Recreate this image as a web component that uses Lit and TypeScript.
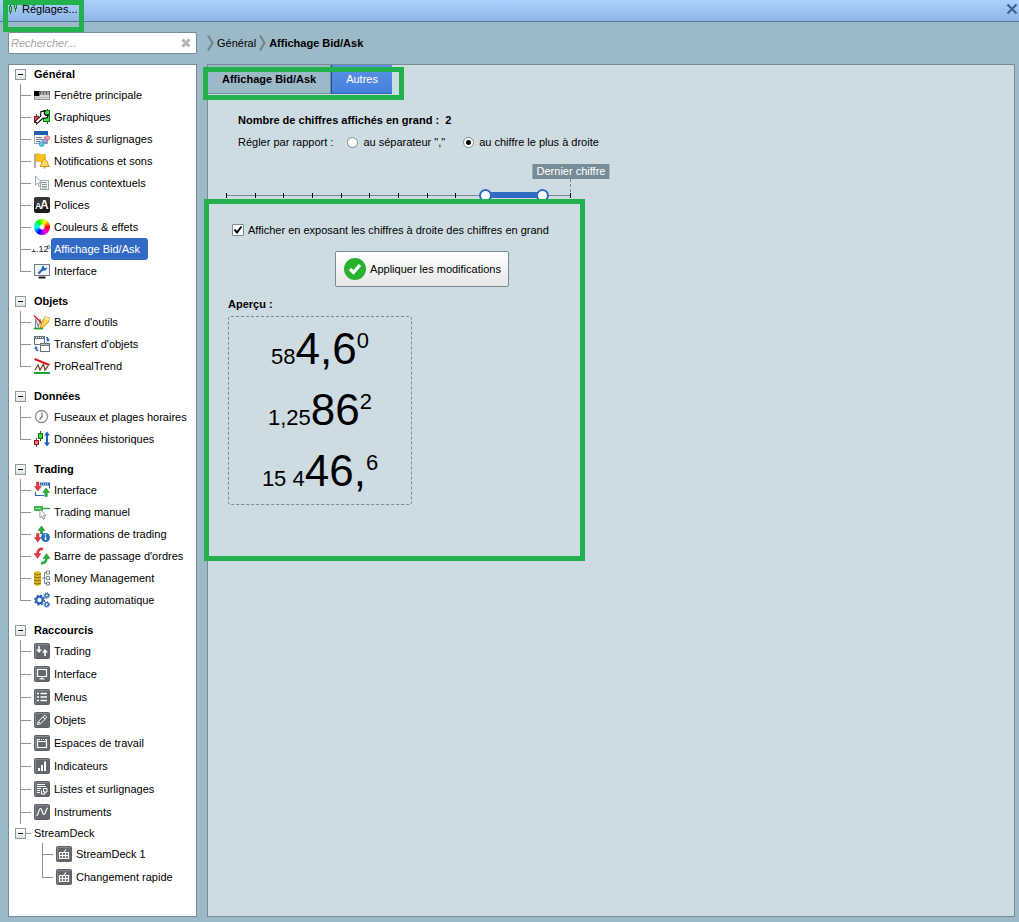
import { LitElement, html, css, svg, nothing } from "lit";
import { customElement, state } from "lit/decorators.js";
import { classMap } from "lit/directives/class-map.js";

const gray = (content: unknown) => svg`
  <rect x="0" y="0" width="16" height="16" rx="2" fill="#5c6165"/>
  <rect x="1" y="1" width="14" height="14" rx="1" fill="#65696d"/>
  <path d="M1.500 14.500V1.500H14.500" fill="none" stroke="#84898d" stroke-width="1"/>
  ${content}`;

const keypad = gray(svg`<path d="M3.500 6.500h9v6h-9zM3.500 9.500h9M6.500 6.500v6M9.500 6.500v6M8 6l2-2.500" fill="none" stroke="#fff" stroke-width="1.200"/>`);

const icons: Record<string, unknown> = {
  window: svg`<rect x=".5" y="4.500" width="15" height="8" fill="#d3d7d9" stroke="#8b9195"/><path d="M0 4h5.500v5H0z" fill="#000"/><path d="M6 4.500h10v3H6z" fill="#555b5f"/><path d="M7 6h8" stroke="#fff" stroke-dasharray="2 1"/><path d="M1 10.500h14" stroke="#b4babd"/>`,
  charts: svg`<path d="M2.500 5v11M13.500 0v15" stroke="#1a5a1a"/><rect x=".5" y="7.500" width="4" height="6" fill="#e8505b" stroke="#8a1420"/><rect x="9.500" y="1.500" width="6" height="11" fill="#4fdc4f" stroke="#107a10"/><path d="M2 13.500L6.500 9.500 10.500 5" fill="none" stroke="#000" stroke-width="4"/><path d="M7 2.500l-.5 4 3 3 4-1 .8-3-2.300 1-1.800-1.800 1-2.700z" fill="#fff" stroke="#000" stroke-width="1.100"/><path d="M2.500 13L9 7" fill="none" stroke="#fff" stroke-width="2"/>`,
  lists: svg`<rect x=".5" y=".5" width="13" height="12" fill="#f6f8fa" stroke="#9aa6b2"/><path d="M0 0h14v4H0z" fill="#1f5fae"/><path d="M2 6.500h6M2 8.500h7M2 10.500h4M10 6.500h2" stroke="#6b7680"/><rect x="11" y="5" width="4.500" height="4" rx="1" fill="#f39aa6" stroke="#c86a78" stroke-width=".6"/><rect x="8.500" y="8" width="4.500" height="4" rx="1" fill="#b5a2dc" stroke="#7d6ab0" stroke-width=".6"/><rect x="5.500" y="10.800" width="4.500" height="4.500" rx="1" fill="#55c5ee" stroke="#2289b5" stroke-width=".6"/>`,
  bell: svg`<path d="M1 1v14" stroke="#999" stroke-width="1.600"/><path d="M1.800 1c3-1.500 4 1.600 9.500.3V8.500c-4 1.500-6-1.300-9.500 0z" fill="#fbc21b" stroke="#e0a012" stroke-width=".6"/><path d="M6 13.500c1.800-1.500 1-5.500 3.500-6.500 0-1 2-1 2 0 2.800 1 2 5 4 6.500z" fill="#ffd966" stroke="#d88a0c" stroke-width=".9"/><path d="M9 14.500a1.700 1.300 0 0 0 3.300 0z" fill="#e08a0c"/>`,
  menu: svg`<rect x="6.500" y="5.500" width="8" height="9" fill="#f4f6f7" stroke="#a1adb5"/><path d="M8 7.500h5M8 9.500h5M8 11.500h5M8 13h5" stroke="#7e8d97" stroke-width=".9"/><path d="M1.500 1v9l2.200-2 1.500 3.500 1.600-.7L5.300 7.500h2.800z" fill="#fff" stroke="#8c979e" stroke-width=".9"/>`,
  fonts: svg`<rect width="16" height="16" rx="2.500" fill="#1c1c1c"/><path d="M0 2.500A2.500 2.500 0 0 1 2.500 0h11A2.500 2.500 0 0 1 16 2.500V7H0z" fill="#383838"/><text x="1" y="12" font-size="9" font-weight="bold" fill="#fff">A</text><text x="6" y="12" font-size="12" font-weight="bold" fill="#fff">A</text>`,
  price: svg`<text x="-3" y="11" font-size="9" fill="#222">1.12</text><text x="13" y="11" font-size="9" fill="#222">º</text><path d="M-3 2h4v6h-4z" fill="#fff"/>`,
  screen: svg`<rect x=".5" y="1.500" width="15" height="11" fill="#eef3f8" stroke="#6f7a82"/><path d="M4.500 14.500h7" stroke="#222" stroke-width="2"/><path d="M4.500 10.500l4.500-4.500" stroke="#1f62c0" stroke-width="2.200"/><path d="M8 3.500l2-1v2.500h2.200l.3-1.500.5 2-1.500 2H9L7.500 6z" fill="#1f62c0"/>`,
  tools: svg`<path d="M1.500 14V5l3 8 1.500-8 2.500 9" fill="none" stroke="#888" stroke-width="1.100"/><path d="M0 1.500l9 9" stroke="#e0202a" stroke-width="1.500"/><path d="M0 14.500h9" stroke="#18a52a" stroke-width="1.800"/><path d="M11 2.500l4.500 1.500-1 4L9 13.500l-2.500.5.5-4z" fill="#ffd24a" stroke="#b98a14" stroke-width=".9"/><path d="M11 2.500l4.500 1.500-.7 2.500-5-1.500z" fill="#ffe9a0"/>`,
  transfer: svg`<rect x=".5" y=".5" width="10" height="8" fill="#fff" stroke="#68727a"/><path d="M0 0h11v3H0z" fill="#68727a"/><path d="M2 1.500h7" stroke="#fff" stroke-dasharray="1 1"/><rect x="6.500" y="7.500" width="9" height="8" fill="#fff" stroke="#68727a"/><path d="M6 7h10v3H6z" fill="#68727a"/><path d="M7.500 8.500h7" stroke="#fff" stroke-dasharray="1 1"/><path d="M12 1.500q2 0 2 2.500" fill="none" stroke="#1f62c0" stroke-width="1.400"/><path d="M12 3.500h4l-2 2.500zM0 12.500h4l-2-2.500z" fill="#1f62c0"/><path d="M4.500 14.500q-2.500 0-2.500-2.500" fill="none" stroke="#1f62c0" stroke-width="1.400"/>`,
  trend: svg`<path d="M.5 1l15 6" stroke="#e01822" stroke-width="2"/><path d="M1 12l3-5 2 5 3.500-6 1.500 6 3-4" fill="none" stroke="#7b4b3a" stroke-width="1.300"/><path d="M0 15h16" stroke="#18a52a" stroke-width="2"/>`,
  clock: svg`<circle cx="7.500" cy="7.500" r="6" fill="#fff" stroke="#8b9195" stroke-width="1.300"/><path d="M8 3.500v4.500L5.500 10.500" fill="none" stroke="#666" stroke-width="1.100"/>`,
  history: svg`<path d="M2.500 7v9M6.500 0v10" stroke="#444"/><rect x=".5" y="9.500" width="4" height="4" fill="#f07a7f" stroke="#a01620"/><rect x="4.500" y="2.500" width="4" height="5" fill="#43d943" stroke="#107a10"/><path d="M13 3v10" stroke="#1f62c0" stroke-width="2"/><path d="M10 4.500h6l-3-4zM10 11.500h6l-3 4z" fill="#1f62c0"/>`,
  tradeUi: svg`<path d="M6 1.500h9.500v5M1.500 10v3.500H10" fill="none" stroke="#2d62b5" stroke-width="1.200"/><path d="M6 .5h10v3H6z" fill="#2d62b5"/><path d="M7 2h8" stroke="#fff" stroke-dasharray="1 1"/><path d="M2.500 0H5v4.500h2.200L3.800 9 .5 4.500h2z" fill="#e33a42" stroke="#a3222a" stroke-width=".5"/><path d="M10.800 14.500h2.500v-4h2.200L12 6 8.700 10.500h2.100z" fill="#27b13a" stroke="#147a22" stroke-width=".5"/>`,
  manual: svg`<path d="M0 2h9v5H0z" fill="#3cb54a"/><path d="M1.500 4.500h6" stroke="#c5efc9" stroke-dasharray="2 1"/><path d="M9 4.500h7" stroke="#18a52a" stroke-width="1.300"/><path d="M6 5v9l2-1.800 1.300 3 1.500-.6-1.300-3h2.700z" fill="#fff" stroke="#858f96" stroke-width=".9"/>`,
  info: svg`<path d="M6.300 8V4.500H4L7.500 0l3.300 4.500H8.700V8z" fill="#27b13a" stroke="#147a22" stroke-width=".5"/><path d="M2.500 7.500H5v4h2L3.800 16 .5 11.500h2z" fill="#e33a42" stroke="#a3222a" stroke-width=".5"/><circle cx="11.500" cy="11.500" r="4.500" fill="#2271c0"/><path d="M11.500 10.500v3.500M11.500 8.300v1.200" stroke="#fff" stroke-width="1.500"/>`,
  orders: svg`<path d="M9 1C5.500.5 3.500 2.500 3.500 6" fill="none" stroke="#e33a42" stroke-width="2.600"/><path d="M0 5.500h7L3.500 10.500z" fill="#e33a42" stroke="#a3222a" stroke-width=".4"/><path d="M7 15c3.500.5 5.500-1.500 5.500-5" fill="none" stroke="#27b13a" stroke-width="2.600"/><path d="M9 10.500h7l-3.500-5z" fill="#27b13a" stroke="#147a22" stroke-width=".4"/>`,
  money: svg`<path d="M0 2.500q3.500-2.500 7 0v12q-3.500 2.500-7 0z" fill="#d9b51f"/><path d="M0 4q3.500 2 7 0M0 7q3.500 2 7 0M0 10q3.500 2 7 0M0 13q3.500 2 7 0" fill="none" stroke="#8a6d08"/><path d="M12 2.500h-1.500v11H12M8 8h4" fill="none" stroke="#7b858c"/><path d="M12.500 1h3v3h-3zM12.500 6.500h3v3h-3zM12.500 12h3v3h-3z" fill="#fff" stroke="#7b858c"/>`,
  gears: svg`<g fill="none" stroke="#2160b4"><circle cx="5.500" cy="8" r="3.300" stroke-width="2.200"/><circle cx="5.500" cy="8" r="4.800" stroke-width="1.400" stroke-dasharray="2 1.770"/><circle cx="12.700" cy="3.500" r="1.800" stroke-width="1.300"/><circle cx="12.700" cy="3.500" r="2.800" stroke-dasharray="1.100 1.100"/><circle cx="12.700" cy="12.500" r="1.800" stroke-width="1.300"/><circle cx="12.700" cy="12.500" r="2.800" stroke-dasharray="1.100 1.100"/></g>`,
  kTrade: gray(svg`<path d="M4.200 3h1.600v3.500H8l-3 3.500-3-3.500h2.200zM10.200 13h1.600V9.500H14L11 6 8 9.500h2.200z" fill="#fff"/>`),
  kScreen: gray(svg`<path d="M3.500 3.500h9v7h-9zM8 10.500v2M5.500 12.800h5" fill="none" stroke="#fff" stroke-width="1.200"/>`),
  kMenu: gray(svg`<path d="M3 4.500h2M3 8h2M3 11.500h2M6.500 4.500H13M6.500 8H13M6.500 11.500H13" stroke="#fff" stroke-width="1.500"/>`),
  kPencil: gray(svg`<path d="M3.500 12.500l.8-3L10 3.700q.7-.7 1.500 0l.8.8q.7.700 0 1.500L6.500 11.700zM9 5l2 2M4.500 9.500l2 2" fill="none" stroke="#fff"/>`),
  kSpace: gray(svg`<path d="M3.500 4.500h9v8h-9z" fill="none" stroke="#fff" stroke-width="1.200"/><path d="M3.500 6.500h9" stroke="#fff"/><path d="M6 4.500h6" stroke="#5a5f63" stroke-width="1" stroke-dasharray="1 1"/>`),
  kBars: gray(svg`<path d="M5 13v-3M8 13V7M11 13V3.500" stroke="#fff" stroke-width="2"/>`),
  kLists: gray(svg`<path d="M3 3.500h8M3 5.500h9M3 7.500h4M3 9.500h3M3 11.500h3" stroke="#fff" stroke-width="1.100"/><path d="M9.500 7.500h3.500v3.500H9.500zM7.500 9.500v3.500h3.500v-2" fill="none" stroke="#fff"/>`),
  kWave: gray(svg`<path d="M2.500 11.500C4.500 12 4.500 4.500 6.500 4.500S8 10.500 10 10.500 11.500 4 14 4" fill="none" stroke="#fff" stroke-width="1.200"/>`),
  keypad,
};

interface Item { label: string; icon: string; selected?: boolean }
interface Group { label: string; items: Item[]; tall?: boolean; sub?: Group }

const groups: Group[] = [
  { label: "Général", items: [
    { label: "Fenêtre principale", icon: "window" },
    { label: "Graphiques", icon: "charts" },
    { label: "Listes & surlignages", icon: "lists" },
    { label: "Notifications et sons", icon: "bell" },
    { label: "Menus contextuels", icon: "menu" },
    { label: "Polices", icon: "fonts" },
    { label: "Couleurs & effets", icon: "wheel" },
    { label: "Affichage Bid/Ask", icon: "price", selected: true },
    { label: "Interface", icon: "screen" },
  ] },
  { label: "Objets", items: [
    { label: "Barre d'outils", icon: "tools" },
    { label: "Transfert d'objets", icon: "transfer" },
    { label: "ProRealTrend", icon: "trend" },
  ] },
  { label: "Données", items: [
    { label: "Fuseaux et plages horaires", icon: "clock" },
    { label: "Données historiques", icon: "history" },
  ] },
  { label: "Trading", items: [
    { label: "Interface", icon: "tradeUi" },
    { label: "Trading manuel", icon: "manual" },
    { label: "Informations de trading", icon: "info" },
    { label: "Barre de passage d'ordres", icon: "orders" },
    { label: "Money Management", icon: "money" },
    { label: "Trading automatique", icon: "gears" },
  ] },
  { label: "Raccourcis", tall: true, items: [
    { label: "Trading", icon: "kTrade" },
    { label: "Interface", icon: "kScreen" },
    { label: "Menus", icon: "kMenu" },
    { label: "Objets", icon: "kPencil" },
    { label: "Espaces de travail", icon: "kSpace" },
    { label: "Indicateurs", icon: "kBars" },
    { label: "Listes et surlignages", icon: "kLists" },
    { label: "Instruments", icon: "kWave" },
  ], sub: { label: "StreamDeck", items: [
    { label: "StreamDeck 1", icon: "keypad" },
    { label: "Changement rapide", icon: "keypad" },
  ] } },
];

@customElement("settings-tree")
class SettingsTree extends LitElement {
  static styles = css`
    :host { display: block; background: #fff; border: 1px solid #768d97; }
    ul { list-style: none; margin: 0; padding: 0; }
    .group + .group { margin-top: 10px; }
    .head { display: flex; align-items: center; box-sizing: border-box; height: 19px; padding: 0 0 1px 6px; font-weight: bold; }
    .toggle {
      width: 11px; height: 11px; box-sizing: border-box; padding: 0; margin-right: 8px;
      display: grid; place-items: center; border: 1px solid #8b9a9f;
      background: linear-gradient(#fff, #dfe3e4);
    }
    .toggle span { width: 5px; height: 1px; background: #000; }
    .item { display: flex; align-items: flex-start; height: 22px; }
    .tall .item { height: 23px; }
    .branch {
      flex: none; width: 25px; height: 100%;
      background:
        linear-gradient(#8c9498, #8c9498) 11px 50% / 11px 1px no-repeat,
        linear-gradient(#8c9498, #8c9498) 11px 0 / 1px 100% no-repeat;
    }
    .last .branch { background-size: 11px 1px, 1px 50%; }
    .link { display: flex; align-items: center; height: 22px; color: #000; text-decoration: none; white-space: nowrap; }
    .link svg, .wheel { flex: none; width: 16px; height: 16px; margin-right: 1px; }
    .link svg { overflow: visible; }
    .wheel {
      border-radius: 50%;
      background:
        radial-gradient(circle, #fff 2px, transparent 3px),
        conic-gradient(from 90deg, #f00, #f0f, #00f, #0ff, #0f0, #ff0, #f00);
    }
    .name { padding: 0 3px; line-height: 22px; border-radius: 3px; }
    .selected .name { position: relative; background: #316ac5; color: #fff; padding-right: 8px; }
    .sub .head { font-weight: normal; }
    .sub .toggle { margin-right: 0; }
    .stub { width: 5px; height: 1px; margin-right: 3px; background: #8c9498; }
    .sub ul { padding-left: 22px; }
  `;

  private head(g: Group, nested: boolean) {
    return html`<div class="head">
      <button class="toggle" aria-label="Réduire ${g.label}"><span></span></button>
      ${nested ? html`<span class="stub"></span>` : nothing}
      <span>${g.label}</span>
    </div>`;
  }

  private list(g: Group) {
    return html`<ul>${g.items.map((it, i) => html`
      <li class=${classMap({ item: true, selected: !!it.selected, last: !g.sub && i === g.items.length - 1 })}>
        <span class="branch"></span>
        <a class="link" href="#">
          ${it.icon === "wheel"
            ? html`<span class="wheel"></span>`
            : html`<svg viewBox="0 0 16 16" aria-hidden="true">${icons[it.icon]}</svg>`}
          <span class="name">${it.label}</span>
        </a>
      </li>`)}</ul>`;
  }

  render() {
    return html`<nav aria-label="Réglages">${groups.map((g) => html`
      <section class=${classMap({ group: true, tall: !!g.tall })}>
        ${this.head(g, false)}${this.list(g)}
        ${g.sub ? html`<div class="sub">${this.head(g.sub, true)}${this.list(g.sub)}</div>` : nothing}
      </section>`)}</nav>`;
  }
}

@customElement("digit-range")
class DigitRange extends LitElement {
  @state() private from = 9;
  @state() private to = 11;

  static styles = css`
    :host { display: block; position: relative; width: 345px; height: 32px; }
    .axis { display: flex; justify-content: space-between; align-items: center; height: 100%;
      background: linear-gradient(#768d97, #768d97) 0 50% / 100% 1px no-repeat; }
    .tick { width: 1px; height: 5px; background: #000; }
    .span { position: absolute; top: 13px; height: 6px; background: #316ac5; }
    input {
      position: absolute; left: -6px; top: 0; width: calc(100% + 13px); height: 100%;
      margin: 0; appearance: none; background: none; pointer-events: none;
    }
    input::-webkit-slider-thumb {
      appearance: none; width: 13px; height: 13px; box-sizing: border-box; border-radius: 50%;
      background: #fff; border: 2px solid #316ac5; pointer-events: auto;
    }
    .tip {
      position: absolute; right: 0; bottom: 32px; transform: translateX(50%);
      padding: 0 4px; line-height: 15px; background: #768d97; color: #fff; white-space: nowrap;
    }
    .guide { position: absolute; right: 0; top: 0; height: 13px; border-left: 1px dashed #768d97; }
  `;

  render() {
    const left = (this.from / 12) * 100;
    const width = ((this.to - this.from) / 12) * 100;
    return html`
      <div class="axis">${Array.from({ length: 13 }, () => html`<span class="tick"></span>`)}</div>
      <div class="span" style="left:${left}%;width:${width}%"></div>
      <input type="range" min="0" max="12" .value=${String(this.from)} aria-label="Premier chiffre en grand"
        @input=${(e: Event) => (this.from = +(e.target as HTMLInputElement).value)}>
      <input type="range" min="0" max="12" .value=${String(this.to)} aria-label="Dernier chiffre en grand"
        @input=${(e: Event) => (this.to = +(e.target as HTMLInputElement).value)}>
      <span class="guide"></span>
      <span class="tip">Dernier chiffre</span>`;
  }
}

@customElement("app-root")
class AppRoot extends LitElement {
  static styles = css`
    :host {
      display: flex; flex-direction: column; position: relative; box-sizing: border-box;
      min-height: 100vh; background: #9bb9c6; color: #000;
      font: 11px "Liberation Sans", Arial, sans-serif;
    }
    button, input { font: inherit; color: inherit; }
    .title {
      display: flex; align-items: center; height: 18px; padding: 0 1px 3px 8px;
      background: linear-gradient(#abd0fc, #8fb6e6); border-bottom: 1px solid #55789f;
    }
    .title svg { margin-right: 4px; }
    .title .close { margin-left: auto; padding: 0; border: 0; background: none; line-height: 0; }
    .title .close svg { margin: 0; }
    .layout {
      flex: 1; display: grid; grid-template: 42px 1fr / 189px 1fr; column-gap: 10px;
      padding: 0 4px 5px 8px;
    }
    .search {
      align-self: center; display: flex; align-items: center; height: 20px; padding: 0 5px 0 2px;
      background: #fff; border: 1px solid #768d97; border-radius: 2px;
    }
    .search input { flex: 1; min-width: 0; padding: 0; border: 0; outline: 0; background: none; font-style: italic; }
    .search input::placeholder { color: #a3a3a3; }
    .search button { padding: 0; border: 0; background: none; line-height: 0; }
    .crumbs { display: flex; align-items: center; gap: 3px; }
    .crumbs a { color: #000; text-decoration: none; }
    .panel { background: #cddce3; border: 1px solid #768d97; }
    .tabs { display: flex; }
    .tab {
      height: 29px; padding: 0 14px; border: 0; background: #9bb9c6; font-weight: bold;
      border-bottom: 1px solid #768d97; border-right: 1px solid #768d97;
    }
    .tab.active {
      border: 0; border-left: 1px solid #1f4f9e; border-bottom: 1px solid #2d62b5;
      background: linear-gradient(#5b92e6, #4580da); color: #fff; font-weight: normal;
    }
    .content { padding: 16px 20px; max-width: 388px; }
    .line { display: flex; align-items: center; height: 20px; padding-left: 10px; font-weight: bold; }
    .radios { display: flex; align-items: center; height: 24px; padding-left: 10px; gap: 18px; }
    .radios .prompt { margin-right: -4px; }
    .radios label { display: flex; align-items: center; gap: 5px; white-space: nowrap; }
    .radios input {
      appearance: none; width: 11px; height: 11px; margin: 0; border-radius: 50%;
      border: 1px solid #768d97; background: #fff; box-sizing: border-box;
    }
    .radios input:checked { background: radial-gradient(circle, #000 2px, #fff 3px); }
    .range { margin: 25px 0 9px -2px; }
    .check { display: flex; align-items: center; gap: 4px; height: 20px; padding-left: 4px; white-space: nowrap; }
    .check input {
      appearance: none; width: 12px; height: 12px; margin: 0; border: 1px solid #768d97;
      border-radius: 1px; background: #fff; box-sizing: border-box;
    }
    .check .box { display: grid; }
    .check .box > * { grid-area: 1 / 1; }
    .check svg { pointer-events: none; visibility: hidden; }
    .check input:checked + svg { visibility: visible; }
    .apply {
      display: flex; align-items: center; gap: 4px; height: 36px; margin: 11px auto 7px; padding: 0 7px 0 8px;
      border: 1px solid #768d97; border-radius: 2px; background: linear-gradient(#fff, #e6e6e6); white-space: nowrap;
    }
    .caption { height: 20px; line-height: 20px; font-weight: bold; }
    .preview {
      display: grid; grid-auto-rows: 61px; align-content: start; box-sizing: border-box; width: 184px; height: 189px;
      margin-top: 2px; padding-top: 1px; border: 1px dashed #768d97; border-radius: 3px;
    }
    .price { display: flex; justify-content: center; align-items: baseline; font-size: 22px; line-height: 61px; white-space: pre; }
    .big { font-size: 44px; }
    .sup { position: relative; top: -16px; }
    .mark { position: absolute; box-sizing: border-box; border: 5px solid #22b14c; pointer-events: none; }
    .mark-title { left: 3px; top: 0; width: 81px; height: 32px; }
    .mark-tabs { left: 203px; top: 67px; width: 201px; height: 33px; }
    .mark-preview { left: 204px; top: 199px; width: 381px; height: 362px; }
  `;

  private chevron() {
    return html`<svg width="7" height="18" viewBox="0 0 7 18" aria-hidden="true"><path d="M1 1.500L5.500 9 1 16.500" fill="none" stroke="#71878f" stroke-width="2.200"/></svg>`;
  }

  private price(small: string, big: string, sup: string) {
    return html`<div class="price"><span>${small}</span><span class="big">${big}</span><span class="sup">${sup}</span></div>`;
  }

  render() {
    return html`
      <header class="title">
        <svg width="10" height="12" viewBox="0 0 10 12" aria-hidden="true"><path d="M2.500 1v10M7.500 0v9" stroke="#1e7a2c"/><path d="M1.500 3.500h2v5h-2zM6.500 1.500h2v4h-2z" fill="#9bd0a5" stroke="#1e7a2c"/></svg>
        <span>Réglages...</span>
        <button class="close" aria-label="Fermer"><svg width="12" height="12" viewBox="0 0 12 12"><path d="M1.500 1.500l9 9M10.500 1.500l-9 9" stroke="#3c628f" stroke-width="2.200"/></svg></button>
      </header>
      <div class="layout">
        <div class="search">
          <input type="text" placeholder="Rechercher..." aria-label="Rechercher">
          <button aria-label="Effacer"><svg width="10" height="10" viewBox="0 0 10 10"><path d="M1.500 1.500l7 7M8.500 1.500l-7 7" stroke="#b4b4b4" stroke-width="3"/></svg></button>
        </div>
        <nav class="crumbs" aria-label="Chemin">
          ${this.chevron()}<a href="#">Général</a>${this.chevron()}<strong>Affichage Bid/Ask</strong>
        </nav>
        <settings-tree></settings-tree>
        <main class="panel">
          <div class="tabs" role="tablist">
            <button class="tab" role="tab">Affichage Bid/Ask</button>
            <button class="tab active" role="tab" aria-selected="true">Autres</button>
          </div>
          <div class="content">
            <div class="line">Nombre de chiffres affichés en grand : &nbsp;2</div>
            <div class="radios">
              <span class="prompt">Régler par rapport :</span>
              <label><input type="radio" name="ref"><span>au séparateur ","</span></label>
              <label><input type="radio" name="ref" checked><span>au chiffre le plus à droite</span></label>
            </div>
            <digit-range class="range"></digit-range>
            <label class="check">
              <span class="box"><input type="checkbox" checked><svg width="12" height="12" viewBox="0 0 12 12"><path d="M2.500 5.500L5 8.500 9.500 2.500" fill="none" stroke="#000" stroke-width="2"/></svg></span>
              <span>Afficher en exposant les chiffres à droite des chiffres en grand</span>
            </label>
            <button class="apply">
              <svg width="22" height="22" viewBox="0 0 22 22" aria-hidden="true"><circle cx="11" cy="11" r="11" fill="#27b12d"/><path d="M6 11l3.500 3.500L16 7" fill="none" stroke="#fff" stroke-width="3.200"/></svg>
              <span>Appliquer les modifications</span>
            </button>
            <div class="caption">Aperçu :</div>
            <div class="preview">
              ${this.price("58", "4,6", "0")}
              ${this.price("1,25", "86", "2")}
              ${this.price("15 4", "46,", "6")}
            </div>
          </div>
        </main>
      </div>
      <div class="mark mark-title"></div>
      <div class="mark mark-tabs"></div>
      <div class="mark mark-preview"></div>`;
  }
}
